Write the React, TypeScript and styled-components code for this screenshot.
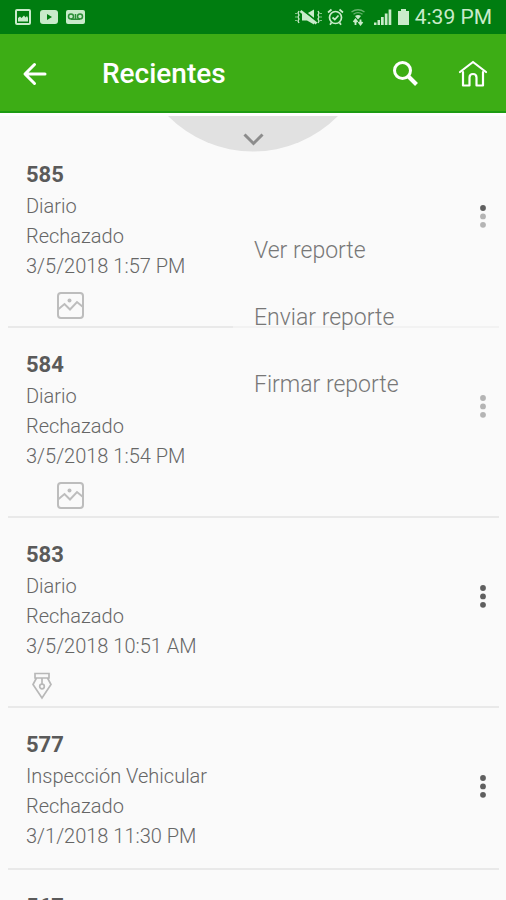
import React from "react";
import styled, { createGlobalStyle } from "styled-components";

const GlobalStyle = createGlobalStyle`
  * { box-sizing: border-box; }
  body { margin: 0; background: #fafafa; }
  button { border: 0; padding: 0; background: none; font: inherit; color: inherit; cursor: pointer; }
  svg { display: block; }
`;

const Screen = styled.div`
  height: 100vh;
  display: flex;
  flex-direction: column;
  overflow: hidden;
  background: #fafafa;
  color: #666;
  font-family: Roboto, sans-serif;
`;

const StatusBar = styled.div`
  flex: none;
  height: 34px;
  padding: 0 14px;
  display: flex;
  align-items: center;
  justify-content: space-between;
  background: #007d10;
  color: #c9ebca;
`;

const StatusGroup = styled.div<{ $gap: number }>`
  display: flex;
  align-items: center;
  gap: ${(p) => p.$gap}px;
`;

const Clock = styled.time`
  font-size: 21px;
  line-height: 34px;
`;

const AppBar = styled.header`
  flex: none;
  height: 79px;
  padding: 3px 17px 0 18px;
  display: flex;
  align-items: center;
  background: #3dad15;
  border-bottom: 2px solid #1d9c12;
  color: #fff;
`;

const Title = styled.h1`
  flex: 1;
  margin: 0 0 0 52px;
  font-size: 28px;
  line-height: 36px;
  font-weight: 500;
`;

const IconButton = styled.button`
  width: 32px;
  height: 32px;
  display: grid;
  place-items: center;
`;

const Actions = styled.div`
  display: flex;
  gap: 36px;
`;

const PullZone = styled.div`
  flex: none;
  height: 25px;
  display: flex;
  justify-content: center;
  align-items: flex-start;
  border-top: 3px solid #fff;
`;

const PullButton = styled.button`
  flex: none;
`;

const List = styled.ul`
  flex: 1;
  min-height: 0;
  margin: 0;
  padding: 0 7px 0 8px;
  list-style: none;
`;

const Row = styled.li<{ $compact: boolean }>`
  position: relative;
  display: flex;
  justify-content: space-between;
  align-items: flex-start;
  padding: 20px 0 ${(p) => (p.$compact ? 17 : 6)}px 18px;
  border-bottom: 2px solid #e9e9e9;
`;

const Number = styled.h2`
  margin: 0;
  font-size: 22px;
  line-height: 33px;
  font-weight: 700;
  color: #5a5a5a;
`;

const Line = styled.p`
  margin: 0;
  font-size: 20px;
  line-height: 30px;
  font-weight: 300;
`;

const Attachments = styled.div`
  display: grid;
  grid-template-columns: 28px 28px;
  margin: 11px 0 0 2px;
`;

const Slot = styled.span<{ $column: number }>`
  grid-column: ${(p) => p.$column};
  height: 28px;
  display: grid;
  place-items: center;
`;

const MoreButton = styled.button`
  width: 32px;
  height: 40px;
  margin-top: 38px;
  display: grid;
  place-items: center;
`;

const Menu = styled.div`
  position: absolute;
  z-index: 1;
  top: 74px;
  right: 0;
  width: 266px;
  padding: 5px 0;
  display: flex;
  flex-direction: column;
  background: rgba(250, 250, 250, 0.55);
`;

const MenuItem = styled.button`
  height: 67px;
  padding-left: 21px;
  text-align: left;
  font-size: 23px;
  line-height: 30px;
  font-weight: 300;
  color: #777;
`;

const NotificationIcons = () => (
  <>
    <svg width="18" height="18" viewBox="0 0 18 18" fill="none">
      <rect x="2" y="2" width="14" height="14" rx="1" stroke="currentColor" strokeWidth="2" />
      <path d="M4 13.500V10l2-1.500 1.500 1.500L10 7.500l1.500 2L13 8l1 2v3.500z" fill="currentColor" />
    </svg>
    <svg width="18" height="14" viewBox="0 0 18 14">
      <rect width="18" height="14" rx="3" fill="currentColor" />
      <path d="M7 4l5 3-5 3z" fill="#007d10" />
    </svg>
    <svg width="19" height="14" viewBox="0 0 19 14" fill="none">
      <rect width="19" height="14" rx="2" fill="currentColor" />
      <g stroke="#2d8f38" strokeWidth="1.500">
        <circle cx="5" cy="6.500" r="2.500" />
        <circle cx="14" cy="6.500" r="2.500" />
        <path d="M5 9.200h9M9.500 4v5" />
      </g>
    </svg>
  </>
);

const MuteIcon = () => (
  <svg width="27" height="18" viewBox="0 0 27 18" fill="none" stroke="currentColor">
    <path d="M7 5.500h5l7-4v15L12 12.500H7z" fill="currentColor" stroke="none" />
    <path d="M7 1.500l15 12" stroke="#007d10" strokeWidth="2" />
    <path d="M5.500 3l16 12.500" strokeWidth="2.800" />
    <path d="M4 3l-1 2 1 2-1 2 1 2-1 2 1 2M1 5v1M1 8.500v1M1 12v1M23 3l1 2-1 2 1 2-1 2 1 2-1 2M26 5v1M26 8.500v1M26 12v1" strokeWidth="1.300" />
  </svg>
);

const AlarmIcon = () => (
  <svg width="17" height="18" viewBox="0 0 17 18" fill="none" stroke="currentColor" strokeWidth="1.700">
    <circle cx="8.500" cy="9.500" r="6" />
    <path d="M5.500 9.500l2.300 2 3.700-4M1 4.500L4.500 1.500M16 4.500L12.500 1.500M4.500 14.500L3 16.700M12.500 14.500L14 16.700" />
  </svg>
);

const WifiIcon = () => (
  <svg width="20" height="18" viewBox="0 0 20 18" fill="none" stroke="currentColor">
    <path d="M2.500 4Q9 -.5 15.500 4M4.500 6.200Q9 3 13.500 6.200" strokeWidth="1.400" opacity=".5" />
    <path d="M6 8q3-2 6 0l-3 3.500z" fill="currentColor" stroke="none" />
    <path d="M6.500 17v-5M4.500 14l2-2.500 2 2.500M11.500 11.500v5M9.500 14l2 2.500 2-2.500" strokeWidth="1.800" />
  </svg>
);

const SignalIcon = () => (
  <svg width="18" height="18" viewBox="0 0 18 18" fill="currentColor">
    <path d="M0 14.500h2.500V17H0zM3.500 12H6v5H3.500zM7 9h2.700v8H7zM10.800 5.500h2.700V17h-2.700zM14.600 1.500h2.700V17h-2.700z" />
  </svg>
);

const BatteryIcon = () => (
  <svg width="13" height="18" viewBox="0 0 13 18" fill="currentColor">
    <path d="M4 1h5v2h3v14H1V3h3z" />
  </svg>
);

const BackIcon = () => (
  <svg width="26" height="26" viewBox="0 0 26 26" fill="none" stroke="currentColor" strokeWidth="3" strokeLinecap="round" strokeLinejoin="round">
    <path d="M24 13H4.500M13.500 3.500L4 13l9.500 9.500" />
  </svg>
);

const SearchIcon = () => (
  <svg width="28" height="28" viewBox="0 0 28 28" fill="none" stroke="currentColor">
    <circle cx="11.500" cy="10.500" r="8" strokeWidth="3" />
    <path d="M17 16l8.500 8.500" strokeWidth="4" />
  </svg>
);

const HomeIcon = () => (
  <svg width="30" height="30" viewBox="0 0 30 30" fill="none" stroke="currentColor" strokeWidth="2.200" strokeLinejoin="round" strokeLinecap="round">
    <path d="M2 13L15 3l13 10" />
    <path d="M5 13v13.500h6.500v-8q0-3.500 3.500-3.500t3.500 3.500v8H25V13" />
  </svg>
);

const PullShape = () => (
  <svg width="170" height="36" viewBox="0 0 170 36" fill="none">
    <path d="M0 0A119.500 119.500 0 0 0 170 0z" fill="#e1e1e1" />
    <path d="M76.500 18.500l9 9 9-9" stroke="#8c8c8c" strokeWidth="3" />
  </svg>
);

const ImageIcon = () => (
  <svg width="28" height="28" viewBox="0 0 28 28" fill="none" stroke="#bdbdbd" strokeWidth="2">
    <rect x="2" y="1" width="25" height="25" rx="3" />
    <path d="M2 17.500L8.500 12l5.500 5.500 7-7.500 6 5" />
    <circle cx="13.500" cy="8.500" r="2" fill="#bdbdbd" stroke="none" />
  </svg>
);

const PenIcon = () => (
  <svg width="22" height="28" viewBox="0 0 22 28" fill="none" stroke="#b8b8b8" strokeWidth="1.700">
    <path d="M4 1.500h14V6H4zM5.500 6L2 12.500 11 26l9-13.500L16.500 6M11 6v6" />
    <circle cx="11" cy="14.500" r="2.300" />
  </svg>
);

const DotsIcon = () => (
  <svg width="8" height="24" viewBox="0 0 8 24" fill="#5f5f5f">
    <circle cx="4" cy="4" r="2.900" />
    <circle cx="4" cy="12.400" r="2.900" />
    <circle cx="4" cy="20.800" r="2.900" />
  </svg>
);

type Report = {
  id: string;
  lines: string[];
  attachment?: "image" | "signature";
};

const reports: Report[] = [
  { id: "585", lines: ["Diario", "Rechazado", "3/5/2018 1:57 PM"], attachment: "image" },
  { id: "584", lines: ["Diario", "Rechazado", "3/5/2018 1:54 PM"], attachment: "image" },
  { id: "583", lines: ["Diario", "Rechazado", "3/5/2018 10:51 AM"], attachment: "signature" },
  { id: "577", lines: ["Inspección Vehicular", "Rechazado", "3/1/2018 11:30 PM"] },
  { id: "567", lines: [] },
];

const actions = ["Ver reporte", "Enviar reporte", "Firmar reporte"];

export default function App() {
  return (
    <Screen>
      <GlobalStyle />
      <StatusBar>
        <StatusGroup $gap={8}>
          <NotificationIcons />
        </StatusGroup>
        <StatusGroup $gap={5}>
          <MuteIcon />
          <AlarmIcon />
          <WifiIcon />
          <SignalIcon />
          <BatteryIcon />
          <Clock>4:39 PM</Clock>
        </StatusGroup>
      </StatusBar>
      <AppBar>
        <IconButton aria-label="Atrás">
          <BackIcon />
        </IconButton>
        <Title>Recientes</Title>
        <Actions>
          <IconButton aria-label="Buscar">
            <SearchIcon />
          </IconButton>
          <IconButton aria-label="Inicio">
            <HomeIcon />
          </IconButton>
        </Actions>
      </AppBar>
      <PullZone>
        <PullButton aria-label="Mostrar filtros">
          <PullShape />
        </PullButton>
      </PullZone>
      <List>
        {reports.map((report, index) => (
          <Row key={report.id} $compact={!report.attachment}>
            <div>
              <Number>{report.id}</Number>
              {report.lines.map((line) => (
                <Line key={line}>{line}</Line>
              ))}
              {report.attachment && (
                <Attachments>
                  <Slot $column={report.attachment === "image" ? 2 : 1}>
                    {report.attachment === "image" ? <ImageIcon /> : <PenIcon />}
                  </Slot>
                </Attachments>
              )}
            </div>
            <MoreButton aria-label={`Opciones de ${report.id}`}>
              <DotsIcon />
            </MoreButton>
            {index === 0 && (
              <Menu role="menu">
                {actions.map((action) => (
                  <MenuItem key={action} role="menuitem">
                    {action}
                  </MenuItem>
                ))}
              </Menu>
            )}
          </Row>
        ))}
      </List>
    </Screen>
  );
}
